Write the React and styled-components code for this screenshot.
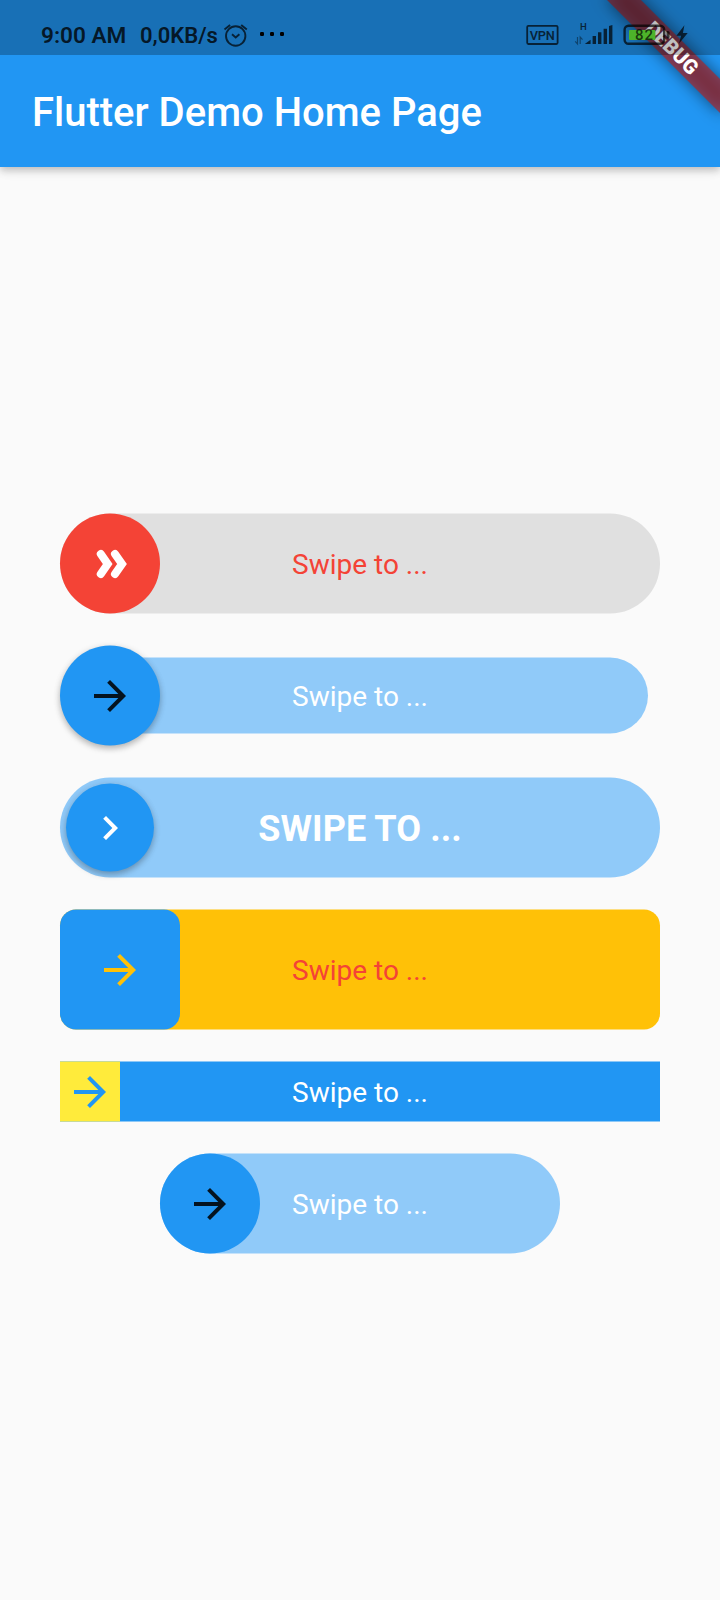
import React from 'react';
import styled, { createGlobalStyle } from 'styled-components';

const GlobalStyle = createGlobalStyle`
  *, *::before, *::after { box-sizing: border-box; }
  body { margin: 0; background: #fafafa; font-family: Roboto, sans-serif; }
`;

const Screen = styled.div`
  position: relative;
  display: flex;
  flex-direction: column;
  width: 720px;
  height: 1600px;
  overflow: hidden;
  background: #fafafa;
`;

const StatusBar = styled.header`
  position: relative;
  z-index: 3;
  flex: none;
  display: flex;
  align-items: center;
  height: 55px;
  padding: 15px 32px 0 41px;
  background: rgba(0, 0, 0, 0.25);
  color: rgba(0, 0, 0, 0.8);
  font-weight: 600;
  white-space: pre;
`;

const Clock = styled.span`
  width: 99px;
  font-size: 22.6px;
`;

const Speed = styled.span`
  width: 83px;
  font-size: 22px;
`;

const StatusIcon = styled.svg`
  display: block;
  flex: none;
  overflow: visible;
`;

const MoreDots = styled(StatusIcon)`
  margin: 0 0 2px 13px;
`;

const Spacer = styled.div`
  flex: 1;
`;

const AppBar = styled.div`
  position: relative;
  z-index: 1;
  flex: none;
  display: flex;
  align-items: center;
  height: 167px;
  margin-top: -55px;
  padding: 59px 32px 0;
  background: #2196f3;
  box-shadow: 0 3px 8px rgba(0, 0, 0, 0.24), 0 2px 16px rgba(0, 0, 0, 0.05);
`;

const Title = styled.h1`
  margin: 0;
  color: #fff;
  font-size: 40px;
  line-height: 48px;
  font-weight: 500;
`;

const Ribbon = styled.div`
  position: absolute;
  z-index: 2;
  top: 36px;
  left: 592px;
  width: 160px;
  height: 24px;
  transform: rotate(45deg);
  color: #fff;
  font-size: 20.4px;
  font-weight: 900;
  line-height: 24px;
  text-align: center;

  &::before {
    content: '';
    position: absolute;
    inset: 0;
    background: rgba(0, 0, 0, 0.5);
    filter: blur(8px);
  }
`;

const RibbonText = styled.div`
  position: relative;
  background: rgba(183, 28, 28, 0.627);
`;

const Content = styled.main`
  flex: 1;
  display: flex;
  flex-direction: column;
  align-items: center;
  justify-content: center;
  gap: 32px;
  padding-bottom: 1px;
`;

const Slider = styled.div`
  display: grid;
  align-items: center;
  width: ${(p) => p.$width || 600}px;
  height: ${(p) => p.$height || 100}px;
  transform: translateY(0.5px);

  & > * { grid-area: 1 / 1; }
`;

const Track = styled.div`
  height: calc(100% - ${(p) => 2 * (p.$inset || 0)}px);
  margin: 0 ${(p) => p.$inset || 0}px;
  border-radius: ${(p) => p.$radius}px;
  background: ${(p) => p.$color};
`;

const Thumb = styled.div`
  display: flex;
  align-items: center;
  justify-content: center;
  width: ${(p) => p.$size}px;
  height: ${(p) => p.$size}px;
  margin-left: ${(p) => p.$inset || 0}px;
  border-radius: ${(p) => p.$radius}px;
  background: ${(p) => p.$color};
  box-shadow: ${(p) => (p.$raised ? '0 3px 6px rgba(0,0,0,.26), 0 1px 8px rgba(0,0,0,.06)' : 'none')};
`;

const Label = styled.div`
  padding-top: ${(p) => (p.$strong ? 2 : 0)}px;
  color: ${(p) => p.$color};
  font-size: ${(p) => (p.$strong ? 36 : 28)}px;
  font-weight: ${(p) => (p.$strong ? 700 : 400)};
  letter-spacing: ${(p) => (p.$strong ? 0.07 : 0)}px;
  text-align: center;
  white-space: nowrap;
`;

const ThumbIcon = styled.svg`
  display: block;
  width: 48px;
  height: 48px;
  transform: translateY(0.5px);
`;

const ICONS = {
  arrow: 'M12 4l-1.41 1.41L16.17 11H4v2h12.17l-5.58 5.59L12 20l8-8z',
  chevron: 'M10 6L8.59 7.41 13.17 12l-4.58 4.59L10 18l6-6z',
};

function Icon({ name, color }) {
  if (name === 'double') {
    return (
      <ThumbIcon viewBox="0 0 48 48" fill="none" stroke={color} strokeWidth="8" strokeLinecap="round">
        <path d="M14.8 14L21.7 24L14.8 34M29 14L36 24L29 34" />
      </ThumbIcon>
    );
  }
  return (
    <ThumbIcon viewBox="0 0 24 24">
      <path d={ICONS[name]} fill={color} />
    </ThumbIcon>
  );
}

const SLIDERS = [
  { track: '#e0e0e0', thumb: '#f44336', icon: 'double', iconColor: '#fff', text: '#f44336' },
  { track: '#90caf9', thumb: '#2196f3', icon: 'arrow', iconColor: 'rgba(0,0,0,.87)', text: '#fff', trackInset: 12, raised: true },
  { track: '#90caf9', thumb: '#2196f3', icon: 'chevron', iconColor: '#fff', text: '#fff', thumbInset: 6, raised: true, strong: true },
  { height: 120, radius: 16, track: '#ffc107', thumb: '#2196f3', icon: 'arrow', iconColor: '#ffc107', text: '#f44336' },
  { height: 60, radius: 0, track: '#2196f3', thumb: '#ffeb3b', icon: 'arrow', iconColor: '#2196f3', text: '#fff' },
  { width: 400, track: '#90caf9', thumb: '#2196f3', icon: 'arrow', iconColor: 'rgba(0,0,0,.87)', text: '#fff' },
];

function SwipeButton({ width, height = 100, radius = 52, track, thumb, icon, iconColor, text, trackInset, thumbInset = 0, raised, strong }) {
  return (
    <Slider $width={width} $height={height}>
      <Track $color={track} $radius={radius} $inset={trackInset} />
      <Label $color={text} $strong={strong}>{strong ? 'SWIPE TO ...' : 'Swipe to ...'}</Label>
      <Thumb $color={thumb} $size={height - 2 * thumbInset} $radius={radius} $inset={thumbInset} $raised={raised}>
        <Icon name={icon} color={iconColor} />
      </Thumb>
    </Slider>
  );
}

const INK = 'rgba(0,0,0,.7)';

export default function App() {
  return (
    <Screen>
      <GlobalStyle />
      <StatusBar>
        <Clock>9:00 AM</Clock>
        <Speed>0,0KB/s</Speed>
        <StatusIcon width="24" height="24" viewBox="223 23 24 24" fill="none" stroke={INK} strokeWidth="1.9">
          <circle cx="235.7" cy="36" r="9.7" />
          <path d="M232 34.2l3.7 3.3 3.7-3.3M224.5 29.5l5.6-4.6M241.2 24.9l5.6 4.6" />
        </StatusIcon>
        <MoreDots width="24" height="4" viewBox="0 0 24 4" fill="#000">
          <rect width="4" height="4" rx="1.2" />
          <rect x="10" width="4" height="4" rx="1.2" />
          <rect x="20" width="4" height="4" rx="1.2" />
        </MoreDots>
        <Spacer />
        <StatusIcon width="162" height="30" viewBox="526 20 162 30" fontFamily="Roboto" fill={INK}>
          <rect x="527.2" y="25.8" width="30.4" height="18.2" rx="1.2" fill="none" stroke={INK} strokeWidth="1.8" />
          <text x="529.7" y="39.7" fontSize="12.8" fontWeight="600" textLength="25">VPN</text>
          <text x="580" y="30" fontSize="9.6" fontWeight="600">H</text>
          <path d="M577.5 37v7l-2.3-2.6M580.2 44v-7l2.3 2.6" fill="none" stroke="rgba(0,0,0,.4)" strokeWidth="1.2" />
          <path d="M584.8 44l5.8-4.2V44zM592.6 36H596v8h-3.4zM598 32.3h3.4V44H598zM603.6 28.7h3.4V44h-3.4zM609 26l3.4-1V44H609z" />
          <rect x="629" y="30" width="26.4" height="10" rx="1" fill="#4db32a" />
          <rect x="624.6" y="25.8" width="39.6" height="18" rx="4" fill="none" stroke={INK} strokeWidth="2.4" />
          <path d="M666.5 31h1.5q1.6 0 1.6 1.6v4.4q0 1.6-1.6 1.6h-1.5z" />
          <text x="635" y="40.2" fontSize="15" fontWeight="500" textLength="18">82</text>
          <path d="M684.4 25.3l-8 10.5h4.7l-2.2 8 8.8-10.8h-4.8z" />
        </StatusIcon>
      </StatusBar>
      <AppBar>
        <Title>Flutter Demo Home Page</Title>
      </AppBar>
      <Ribbon><RibbonText>DEBUG</RibbonText></Ribbon>
      <Content>
        {SLIDERS.map((s, i) => <SwipeButton key={i} {...s} />)}
      </Content>
    </Screen>
  );
}
